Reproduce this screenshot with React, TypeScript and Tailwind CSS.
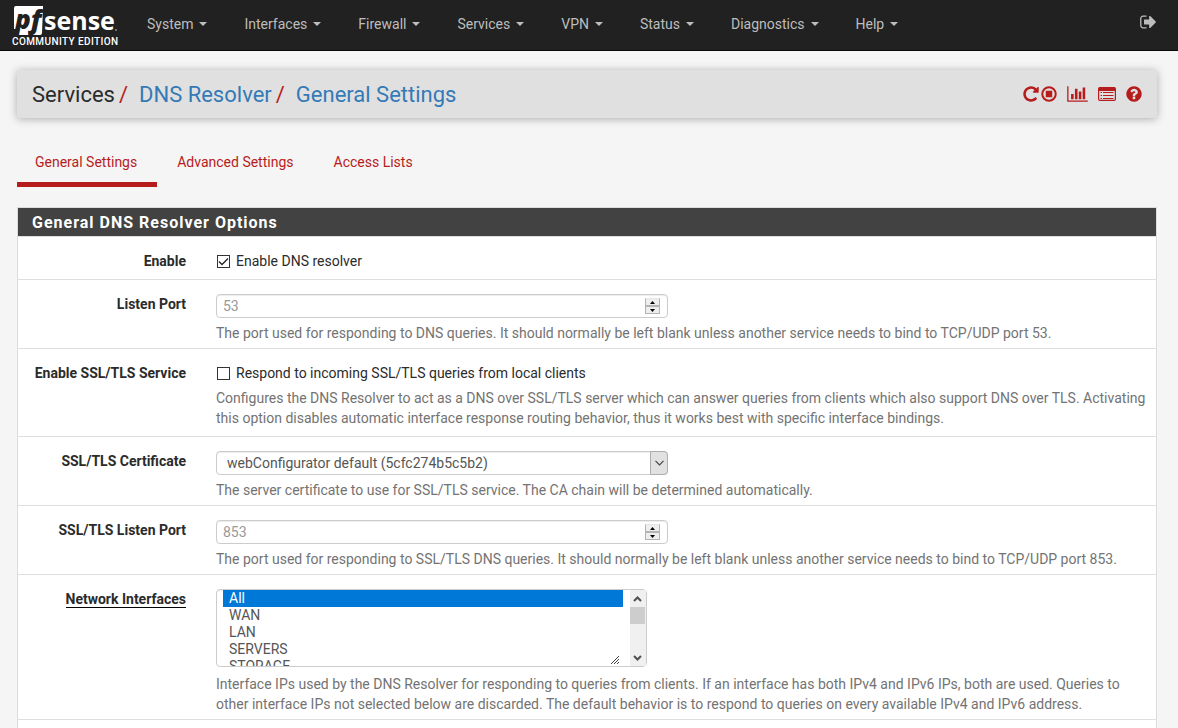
import React from 'react';

const navItems = ['System', 'Interfaces', 'Firewall', 'Services', 'VPN', 'Status', 'Diagnostics', 'Help'];
const tabs = ['General Settings', 'Advanced Settings', 'Access Lists'];
const interfaces = ['All', 'WAN', 'LAN', 'SERVERS', 'STORAGE', 'GUEST', 'DMZ', 'VOIP', 'CAMERAS', 'MANAGEMENT', 'WIFI', 'LAB', 'IOT', 'OPENVPN', 'BACKUP', 'Localhost'];

function Logo() {
  return (
    <svg width="112" height="46" viewBox="0 0 112 46" role="img" aria-label="pfSense Community Edition">
      <path d="M5 4H32V6L31 31Q31 33 29 33H6L8 27H3V6Q3 4 5 4Z" fill="#fff" />
      <text x="4" y="27" fontFamily="'Open Sans', sans-serif" fontWeight="800" fontStyle="italic" fontSize="26" fill="#212121">pf</text>
      <text x="33" y="28" fontFamily="'Open Sans', sans-serif" fontWeight="700" fontSize="25" fill="#fff">sense</text>
      <circle cx="105" cy="28" r="1" fill="#888" />
      <text x="1" y="43" fontFamily="Roboto, sans-serif" fontWeight="500" fontSize="10" letterSpacing="0.400" fill="#fff">COMMUNITY EDITION</text>
    </svg>
  );
}

function SignOutIcon() {
  return (
    <svg width="17" height="18" viewBox="0 0 1664 1792" fill="currentColor" aria-hidden="true">
      <path d="M640 1440q0 4 1 20t0.500 26.500-3 23.500-10 19.500-20.500 6.500h-320q-119 0-203.500-84.500t-84.500-203.500v-704q0-119 84.500-203.500t203.500-84.500h320q13 0 22.500 9.500t9.500 22.500q0 4 1 20t0.500 26.500-3 23.500-10 19.500-20.500 6.500h-320q-66 0-113 47t-47 113v704q0 66 47 113t113 47h312l11.500 1 11.500 3 8 5.500 7 9 2 13.500zM1568 896q0 26-19 45l-544 544q-19 19-45 19t-45-19-19-45v-288h-448q-26 0-45-19t-19-45v-384q0-26 19-45t45-19h448v-288q0-26 19-45t45-19 45 19l544 544q19 19 19 45z" />
    </svg>
  );
}

function RepeatIcon() {
  return (
    <svg width="18" height="18" viewBox="0 0 1792 1792" fill="currentColor" aria-hidden="true">
      <path d="M1664 256v448q0 26-19 45t-45 19h-448q-42 0-59-40-17-39 14-69l138-138q-148-137-349-137-104 0-198.500 40.500t-163.500 109.500-109.500 163.500-40.500 198.500 40.500 198.500 109.500 163.500 163.500 109.500 198.500 40.500q119 0 225-52t179-147q7-10 23-12 15 0 25 9l137 138q9 8 9.500 20.500t-7.500 22.500q-109 132-264 204.500t-327 72.500q-156 0-298-61t-245-164-164-245-61-298 61-298 164-245 245-164 298-61q147 0 284.500 55.500t244.500 156.500l130-129q29-31 70-14 39 17 39 59z" />
    </svg>
  );
}

function StopIcon() {
  return (
    <svg width="18" height="18" viewBox="0 0 1792 1792" aria-hidden="true">
      <circle cx="896" cy="896" r="670" fill="none" stroke="currentColor" strokeWidth="200" />
      <rect x="576" y="576" width="640" height="640" rx="30" fill="currentColor" />
    </svg>
  );
}

function ChartIcon() {
  return (
    <svg width="21" height="18" viewBox="0 0 2048 1792" fill="currentColor" aria-hidden="true">
      <path d="M640 896v512h-256v-512h256zM1024 384v1024h-256v-1024h256zM2048 1536v128h-2048v-1536h128v1408h1920zM1408 640v768h-256v-768h256zM1792 256v1152h-256v-1152h256z" />
    </svg>
  );
}

function ListIcon() {
  return (
    <svg width="18" height="18" viewBox="0 0 18 18" aria-hidden="true">
      <rect x="0.600" y="2.600" width="16.800" height="12.800" rx="1.200" fill="none" stroke="currentColor" strokeWidth="1.200" />
      <path d="M1 2.500H17V6H1Z" fill="currentColor" />
      <path d="M2.500 7.500h1.500M5 7.500h10.500M2.500 10.500h1.500M5 10.500h10.500M2.500 13.500h1.500M5 13.500h10.500" stroke="currentColor" strokeWidth="1" fill="none" />
    </svg>
  );
}

function HelpIcon() {
  return (
    <svg width="18" height="18" viewBox="0 0 1792 1792" fill="currentColor" aria-hidden="true">
      <path d="M1024 1376v-192q0-14-9-23t-23-9h-192q-14 0-23 9t-9 23v192q0 14 9 23t23 9h192q14 0 23-9t9-23zM1280 704q0-88-55.500-163t-138.500-116-170-41q-243 0-371 213-15 24 8 42l132 100q7 6 19 6 16 0 25-12 53-68 86-92 34-24 86-24 48 0 85.500 26t37.500 59q0 38-20 61t-68 45q-63 28-115.500 86.500t-52.500 125.500v36q0 14 9 23t23 9h192q14 0 23-9t9-23q0-19 21.500-49.500t54.500-49.500q32-18 49-28.500t46-35 44.500-48 28-60.500 12.500-81zM1664 896q0 209-103 385.500t-279.500 279.500-385.500 103-385.500-103-279.500-279.500-103-385.500 103-385.500 279.500-279.500 385.500-103 385.500 103 279.500 279.500 103 385.500z" />
    </svg>
  );
}

function Row({ label, htmlFor, underline, children }: { label: string; htmlFor: string; underline?: boolean; children: React.ReactNode }) {
  return (
    <div className="flex border-b border-[#dfdfdf] pt-[14px] pb-[5px]">
      <div className="w-[198px] shrink-0 pr-[30px] text-right font-bold leading-5">
        <label htmlFor={htmlFor} className={underline ? 'mt-0.5 inline-block border-b border-black leading-4' : undefined}>{label}</label>
      </div>
      <div className="min-w-0 flex-1 pr-2">{children}</div>
    </div>
  );
}

function Hint({ children }: { children: React.ReactNode }) {
  return <p className="mt-[5px] leading-5 text-[#737373]">{children}</p>;
}

function Check({ id, label, defaultChecked }: { id: string; label: string; defaultChecked?: boolean }) {
  return (
    <label className="flex items-center gap-[6px] pl-px leading-5">
      <span className="relative flex">
        <input id={id} type="checkbox" defaultChecked={defaultChecked} className="peer size-[13px] appearance-none border border-[#333] bg-white" />
        <svg className="pointer-events-none absolute inset-0 hidden peer-checked:block" width="13" height="13" viewBox="0 0 13 13" aria-hidden="true">
          <path d="M2 6.500L5 9.500L11 3.500" fill="none" stroke="#222" strokeWidth="1.300" />
        </svg>
      </span>
      {label}
    </label>
  );
}

function PortInput({ id, placeholder }: { id: string; placeholder: string }) {
  const ref = React.useRef<HTMLInputElement>(null);
  return (
    <div className="relative w-[452px] max-w-full">
      <input
        ref={ref}
        id={id}
        type="number"
        placeholder={placeholder}
        className="block h-6 w-full appearance-none rounded-[4px] border border-[#ccc] bg-white px-[6px] text-[#555] shadow-[inset_0_1px_1px_rgba(0,0,0,0.075)] [-moz-appearance:textfield] placeholder:text-[#999] [&::-webkit-inner-spin-button]:appearance-none"
      />
      <div className="absolute right-2 top-1 flex flex-col">
        <button type="button" aria-label="Increase" onClick={() => ref.current?.stepUp()} className="flex h-2 w-[15px] items-center justify-center border border-[#b4b4b4] border-t-[#e6e6e6] bg-[#eee]">
          <svg width="5" height="3" viewBox="0 0 5 3" aria-hidden="true"><path d="M2.500 0L5 3H0Z" fill="#000" /></svg>
        </button>
        <button type="button" aria-label="Decrease" onClick={() => ref.current?.stepDown()} className="flex h-2 w-[15px] items-center justify-center border border-[#b4b4b4] bg-[#eee]">
          <svg width="5" height="3" viewBox="0 0 5 3" aria-hidden="true"><path d="M2.500 3L5 0H0Z" fill="#000" /></svg>
        </button>
      </div>
    </div>
  );
}

export default function App() {
  return (
    <div className="flex min-h-screen flex-col bg-[#f5f5f5] font-['Roboto',sans-serif] text-[14px] leading-5 text-[#2b2b2b]">
      <nav className="flex h-[51px] items-center border-b border-[#080808] bg-[#212121] pl-[11px] pr-[21px] text-[#bdbdbd]">
        <a href="#" className="mr-6 shrink-0"><Logo /></a>
        <ul className="mt-[-2px] flex flex-1 gap-[37px]">
          {navItems.map((item) => (
            <li key={item}>
              <a href="#" className="flex items-center gap-[6px]">
                {item}
                <span className="border-x-4 border-t-4 border-x-transparent border-t-current" />
              </a>
            </li>
          ))}
        </ul>
        <a href="#" aria-label="Log out" className="mt-[-6px]"><SignOutIcon /></a>
      </nav>

      <div className="flex flex-1 flex-col pl-[17px] pr-[21px] pt-[19px]">
        <header className="flex h-12 items-center justify-between rounded-[2px] bg-[#e0e0e0] pl-[15px] pr-[14px] shadow-[0_1px_8px_rgba(0,0,0,0.3)]">
          <h1 className="flex pt-0.5 text-[22px] leading-6">
            <span>Services</span>
            <span className="px-[4px] text-[#b71c1c]">/</span>
            <a href="#" className="pl-[7px] text-[#337ab7]">DNS Resolver</a>
            <span className="px-[4px] text-[#b71c1c]">/</span>
            <a href="#" className="pl-[7px] text-[#337ab7]">General Settings</a>
          </h1>
          <div className="flex items-center text-[#b71c1c]">
            <a href="#" aria-label="Restart service"><RepeatIcon /></a>
            <a href="#" aria-label="Stop service"><StopIcon /></a>
            <a href="#" aria-label="Status" className="ml-[9px]"><ChartIcon /></a>
            <a href="#" aria-label="Logs" className="ml-[10px]"><ListIcon /></a>
            <a href="#" aria-label="Help" className="ml-[9px]"><HelpIcon /></a>
          </div>
        </header>

        <ul className="mt-[34px] flex text-[#b71c1c]">
          {tabs.map((tab, i) => (
            <li key={tab}>
              <a href="#" className={i === 0 ? 'block border-b-[5px] border-[#b71c1c] pl-[18px] pr-5 pb-[10px]' : 'mr-px block pl-5 pr-[19px] pb-[10px]'}>{tab}</a>
            </li>
          ))}
        </ul>

        <section className="mt-5 flex-1 border border-b-0 border-[#dcdcdc] bg-white">
          <h2 className="h-7 bg-[#424242] pl-[14px] pt-px text-[16px] font-bold leading-7 tracking-[1px] text-white">General DNS Resolver Options</h2>
          <form className="border-t border-[#dfdfdf]">
            <Row label="Enable" htmlFor="enable">
              <div className="pb-[3px]"><Check id="enable" label="Enable DNS resolver" defaultChecked /></div>
            </Row>
            <Row label="Listen Port" htmlFor="port">
              <PortInput id="port" placeholder="53" />
              <Hint>The port used for responding to DNS queries. It should normally be left blank unless another service needs to bind to TCP/UDP port 53.</Hint>
            </Row>
            <Row label="Enable SSL/TLS Service" htmlFor="enablessl">
              <div className="pb-[3px]">
                <Check id="enablessl" label="Respond to incoming SSL/TLS queries from local clients" />
                <Hint>Configures the DNS Resolver to act as a DNS over SSL/TLS server which can answer queries from clients which also support DNS over TLS. Activating this option disables automatic interface response routing behavior, thus it works best with specific interface bindings.</Hint>
              </div>
            </Row>
            <Row label="SSL/TLS Certificate" htmlFor="cert">
              <div className="relative w-[452px] max-w-full">
                <select id="cert" className="block h-6 w-full appearance-none rounded-[4px] border border-[#ccc] bg-white pl-[10px] pr-6 text-[#555] shadow-[inset_0_1px_1px_rgba(0,0,0,0.075)]">
                  <option>webConfigurator default (5cfc274b5c5b2)</option>
                </select>
                <span className="pointer-events-none absolute right-0 top-0 flex h-6 w-[18px] items-center justify-center rounded-r-[4px] border border-[#adadad] bg-[#e1e1e1]">
                  <svg width="9" height="6" viewBox="0 0 9 6" aria-hidden="true"><path d="M0.500 0.800L4.500 4.800L8.500 0.800" fill="none" stroke="#444" strokeWidth="1.200" /></svg>
                </span>
              </div>
              <Hint>The server certificate to use for SSL/TLS service. The CA chain will be determined automatically.</Hint>
            </Row>
            <Row label="SSL/TLS Listen Port" htmlFor="tlsport">
              <PortInput id="tlsport" placeholder="853" />
              <Hint>The port used for responding to SSL/TLS DNS queries. It should normally be left blank unless another service needs to bind to TCP/UDP port 853.</Hint>
            </Row>
            <Row label="Network Interfaces" htmlFor="interfaces" underline>
              <div className="relative mb-[7px] w-[431px] max-w-full">
                <select
                  id="interfaces"
                  multiple
                  defaultValue={['All']}
                  className="block h-[78px] w-full overflow-y-scroll rounded-[4px] border border-[#ccc] bg-white pl-[6px] text-[#555] shadow-[inset_0_1px_1px_rgba(0,0,0,0.075)] [&::-webkit-scrollbar]:w-4"
                >
                  {interfaces.map((name) => (
                    <option key={name} value={name} className="h-[17px] min-h-0 px-[6px] py-0 leading-[17px] checked:bg-[linear-gradient(#0078d7,#0078d7)] checked:text-white">{name}</option>
                  ))}
                </select>
                <svg className="pointer-events-none absolute right-px top-px" width="23" height="76" viewBox="0 0 23 76" aria-hidden="true">
                  <rect width="7" height="76" fill="#fff" />
                  <rect x="7" width="16" height="76" fill="#f0f0f0" />
                  <rect x="7" y="17" width="15" height="17" fill="#cdcdcd" />
                  <path d="M11 11L14.500 7.500L18 11M11 66L14.500 69.500L18 66" fill="none" stroke="#505050" strokeWidth="2" />
                </svg>
                <svg className="pointer-events-none absolute bottom-[3px] right-7" width="8" height="8" viewBox="0 0 8 8" aria-hidden="true">
                  <path d="M0 8L8 0M3 8L8 3M6 8L8 6" stroke="#444" strokeWidth="1" />
                </svg>
              </div>
              <Hint>Interface IPs used by the DNS Resolver for responding to queries from clients. If an interface has both IPv4 and IPv6 IPs, both are used. Queries to other interface IPs not selected below are discarded. The default behavior is to respond to queries on every available IPv4 and IPv6 address.</Hint>
            </Row>
          </form>
        </section>
      </div>
    </div>
  );
}
